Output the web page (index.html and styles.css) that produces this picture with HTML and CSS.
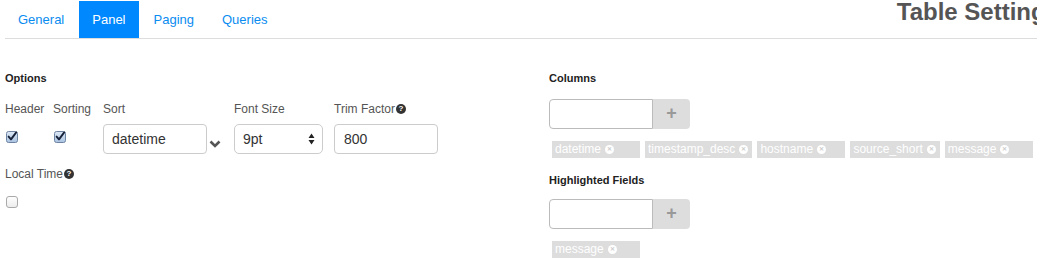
FILE: index.html
```html
<!DOCTYPE html>
<html>
<head>
<meta charset="utf-8">
<link rel="stylesheet" href="styles.css">
</head>
<body>
<div class="page">
  <div class="header">
    <ul class="tabs">
      <li class="tab">General</li>
      <li class="tab active">Panel</li>
      <li class="tab">Paging</li>
      <li class="tab">Queries</li>
    </ul>
    <h3 class="title">Table Settings</h3>
  </div>
  <div class="content">
    <div class="col">
      <h5 class="heading">Options</h5>
      <div class="fields">
        <div class="field f-header">
          <label class="lbl">Header</label>
          <span class="cb-wrap">
            <svg class="cb" width="12" height="12" viewBox="0 0 12 12"><defs><linearGradient id="g1" x1="0" y1="0" x2="0" y2="1"><stop offset="0" stop-color="#dfe9f5"/><stop offset="1" stop-color="#a9c2e0"/></linearGradient></defs><rect x="0.5" y="0.5" width="11" height="11" rx="2" fill="url(#g1)" stroke="#6e83a3"/><path d="M2.6 5.6 L5 8.4 L10.2 1.4" fill="none" stroke="#17223a" stroke-width="1.9" stroke-linecap="round" stroke-linejoin="round"/></svg>
          </span>
        </div>
        <div class="field f-sorting">
          <label class="lbl">Sorting</label>
          <span class="cb-wrap">
            <svg class="cb" width="12" height="12" viewBox="0 0 12 12"><defs><linearGradient id="g2" x1="0" y1="0" x2="0" y2="1"><stop offset="0" stop-color="#dfe9f5"/><stop offset="1" stop-color="#a9c2e0"/></linearGradient></defs><rect x="0.5" y="0.5" width="11" height="11" rx="2" fill="url(#g2)" stroke="#6e83a3"/><path d="M2.6 5.6 L5 8.4 L10.2 1.4" fill="none" stroke="#17223a" stroke-width="1.9" stroke-linecap="round" stroke-linejoin="round"/></svg>
          </span>
        </div>
        <div class="field f-sort">
          <label class="lbl">Sort</label>
          <div class="sort-row">
            <div class="input sort-input">datetime</div>
            <svg class="chev" width="12" height="8" viewBox="0 0 12 8"><path d="M1.5 1.5 L6 6 L10.5 1.5" fill="none" stroke="#555" stroke-width="2.6" stroke-linejoin="miter"/></svg>
          </div>
        </div>
        <div class="field f-font">
          <label class="lbl">Font Size</label>
          <div class="input select">
            <span>9pt</span>
            <svg class="updown" width="7" height="12" viewBox="0 0 7 12"><path d="M3.5 0.5 L6.5 5 L0.5 5 Z M0.5 7 L6.5 7 L3.5 11.5 Z" fill="#222"/></svg>
          </div>
        </div>
        <div class="field f-trim">
          <label class="lbl">Trim Factor<span class="q">?</span></label>
          <div class="input trim-input">800</div>
        </div>
      </div>
      <label class="lbl local">Local Time<span class="q">?</span></label>
      <span class="cb-wrap single">
        <svg class="cb" width="12" height="12" viewBox="0 0 12 12"><defs><linearGradient id="g3" x1="0" y1="0" x2="0" y2="1"><stop offset="0" stop-color="#ffffff"/><stop offset="1" stop-color="#ececec"/></linearGradient></defs><rect x="0.5" y="0.5" width="11" height="11" rx="2.5" fill="url(#g3)" stroke="#a9a9a9"/></svg>
      </span>
    </div>
    <div class="col">
      <h5 class="heading">Columns</h5>
      <div class="input-group">
        <div class="ig-input"></div>
        <div class="ig-btn">+</div>
      </div>
      <div class="tags">
        <span class="tag">datetime <span class="x">&#x2715;</span></span>
        <span class="tag">timestamp_desc <span class="x">&#x2715;</span></span>
        <span class="tag">hostname <span class="x">&#x2715;</span></span>
        <span class="tag">source_short <span class="x">&#x2715;</span></span>
        <span class="tag">message <span class="x">&#x2715;</span></span>
      </div>
      <h5 class="heading hl">Highlighted Fields</h5>
      <div class="input-group hl-group">
        <div class="ig-input"></div>
        <div class="ig-btn">+</div>
      </div>
      <div class="tags">
        <span class="tag">message <span class="x">&#x2715;</span></span>
      </div>
    </div>
  </div>
</div>
</body>
</html>
```

FILE: styles.css
```css
html, body {
  margin: 0;
  padding: 0;
  background: #fff;
  overflow: hidden;
}
body {
  font-family: "Liberation Sans", Arial, Helvetica, sans-serif;
  color: #333;
  width: 1037px;
}
.page {
  width: 1100px;
}
.header {
  display: flex;
  align-items: flex-start;
  height: 38px;
  margin-left: 5px;
  border-bottom: 1px solid #dddddd;
}
.tabs {
  list-style: none;
  margin: 1px 0 0 0;
  padding: 0;
  display: flex;
  gap: 2px;
}
.tab {
  height: 37px;
  line-height: 37px;
  padding: 0 13px;
  font-size: 13px;
  color: #0a8cf0;
}
.tab.active {
  background: #0088ff;
  color: #fff;
}
.title {
  margin: 0 0 0 auto;
  padding-right: 41px;
  font-size: 24px;
  font-weight: bold;
  line-height: 24px;
  padding-top: 0;
  color: #555;
}
.content {
  display: grid;
  grid-template-columns: 544px 544px;
  margin-left: 5px;
}
.col {
  display: flex;
  flex-direction: column;
  align-items: flex-start;
}
.heading {
  margin: 31px 0 0 0;
  font-size: 11px;
  line-height: 16px;
  font-weight: bold;
  color: #222;
}
.fields {
  display: flex;
  margin-top: 15px;
}
.field {
  display: flex;
  flex-direction: column;
}
.f-header { width: 48px; }
.f-sorting { width: 50px; }
.f-sort { width: 131px; }
.f-font { width: 100px; }
.f-trim { width: 104px; }
.lbl {
  font-size: 12px;
  line-height: 16px;
  color: #555;
  display: flex;
  align-items: center;
}
.q {
  display: inline-block;
  width: 10px;
  height: 10px;
  border-radius: 50%;
  background: #333;
  color: #fff;
  font-size: 8px;
  font-weight: bold;
  line-height: 10px;
  text-align: center;
  margin-left: 1px;
}
.cb-wrap {
  display: block;
  margin-top: 14px;
  margin-left: 1px;
  height: 12px;
}
.cb { display: block; }
.input {
  box-sizing: border-box;
  height: 30px;
  margin-top: 7px;
  border: 1px solid #cccccc;
  border-radius: 4px;
  font-size: 14px;
  line-height: 28px;
  padding: 0 10px;
  color: #333;
  background: #fff;
}
.sort-row {
  display: flex;
  align-items: flex-start;
}
.sort-input { width: 104px; padding-left: 8px; }
.chev {
  margin-top: 23px;
  margin-left: 2px;
}
.select {
  width: 89px;
  display: flex;
  align-items: center;
  justify-content: space-between;
  border-radius: 5px;
  padding: 0 7px 0 8px;
}
.updown { display: block; }
.trim-input { width: 104px; padding-left: 9px; }
.local {
  margin-top: 12px;
}
.single {
  margin-top: 14px;
}
.input-group {
  display: flex;
  margin-top: 13px;
}
.hl-group { margin-top: 11px; }
.hl { margin-top: 14px; }
.ig-input {
  box-sizing: border-box;
  width: 104px;
  height: 30px;
  border: 1px solid #bbb;
  border-radius: 4px 0 0 4px;
  background: #fff;
}
.ig-btn {
  width: 37px;
  height: 30px;
  background: #dddddd;
  border-radius: 0 4px 4px 0;
  color: #999;
  font-size: 18px;
  font-weight: bold;
  line-height: 29px;
  text-align: center;
}
.tags {
  display: flex;
  gap: 5px;
  margin-top: 12px;
  margin-left: 3px;
}
.tag {
  box-sizing: border-box;
  min-width: 88px;
  height: 17px;
  line-height: 17px;
  padding: 0 4px 0 3px;
  background: #dddddd;
  color: #fff;
  font-size: 12px;
  white-space: nowrap;
  display: flex;
  align-items: center;
}
.x {
  display: inline-block;
  width: 9px;
  height: 9px;
  border-radius: 50%;
  background: #fff;
  color: #ccc;
  font-size: 6px;
  font-weight: bold;
  line-height: 9px;
  text-align: center;
  margin-left: 4px;
}
```
